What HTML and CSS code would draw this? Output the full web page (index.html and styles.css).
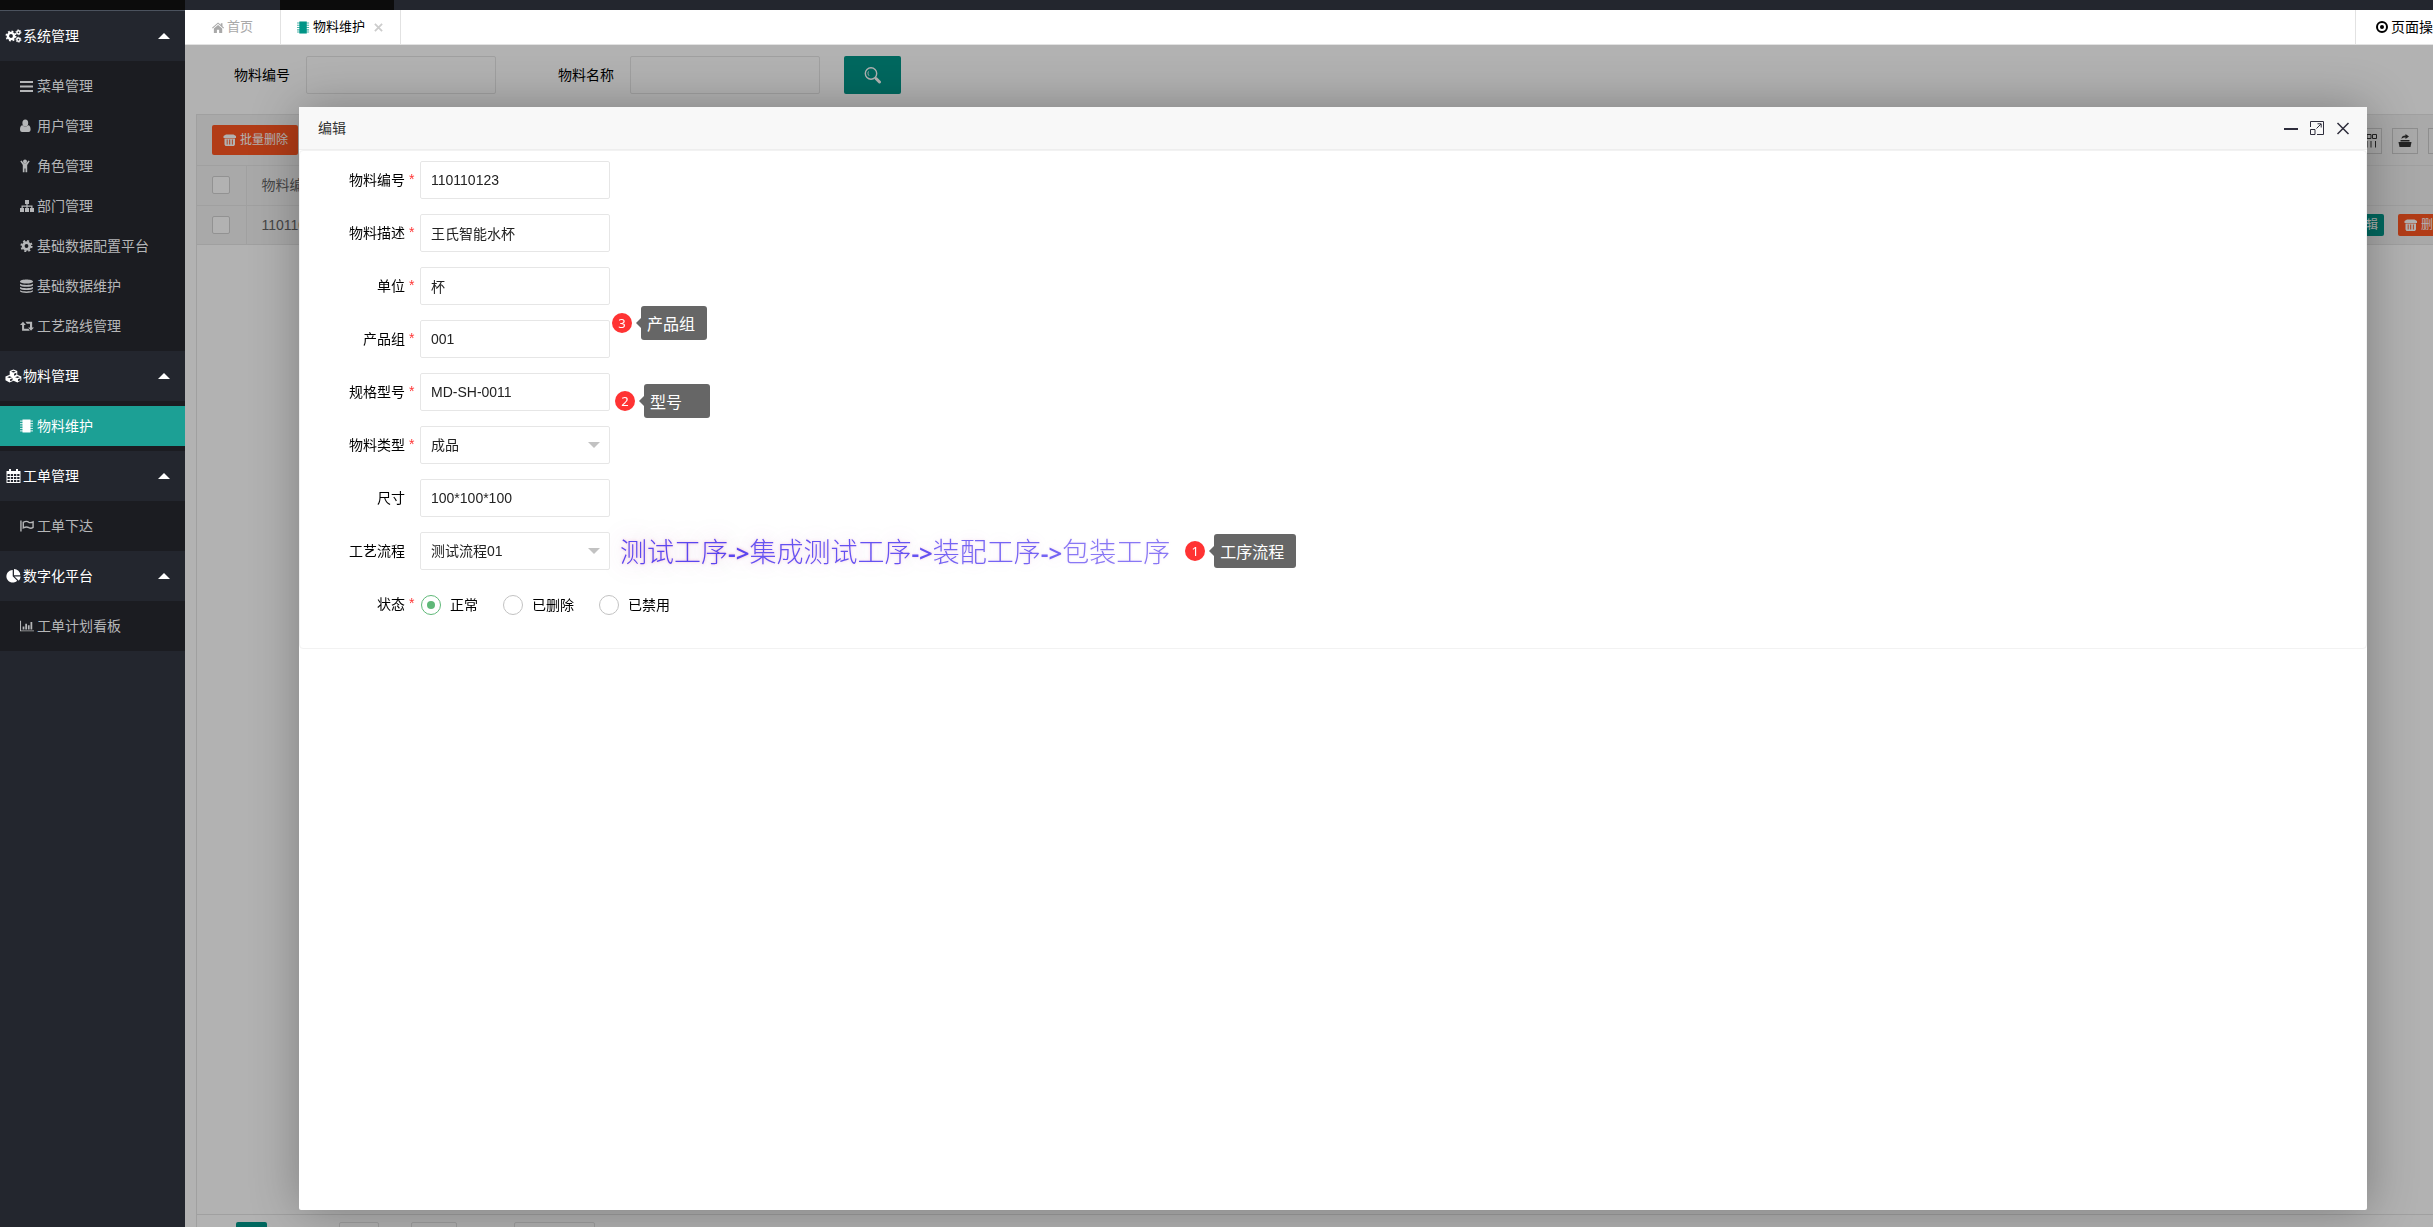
FILE: index.html
```html
<!DOCTYPE html>
<html lang="zh-CN">
<head>
<meta charset="utf-8">
<title>物料维护</title>
<link rel="stylesheet" href="styles.css">
</head>
<body>
<svg class="defs" aria-hidden="true">
  <symbol id="i-gears" viewBox="0 0 16 14"><circle cx="5.500" cy="7" r="3.100" fill="none" stroke="currentColor" stroke-width="2.400"/><circle cx="5.500" cy="7" r="4.700" fill="none" stroke="currentColor" stroke-width="1.600" stroke-dasharray="1.850 1.840"/><circle cx="13" cy="3.300" r="1.600" fill="none" stroke="currentColor" stroke-width="1.500"/><circle cx="13" cy="3.300" r="2.500" fill="none" stroke="currentColor" stroke-width="1" stroke-dasharray="1.200 1.400"/><circle cx="13" cy="10.700" r="1.600" fill="none" stroke="currentColor" stroke-width="1.500"/><circle cx="13" cy="10.700" r="2.500" fill="none" stroke="currentColor" stroke-width="1" stroke-dasharray="1.200 1.400"/></symbol>
  <symbol id="i-bars" viewBox="0 0 14 14"><path d="M0 2h13v2H0zM0 6.500h13v2H0zM0 11h13v2H0z"/></symbol>
  <symbol id="i-user" viewBox="0 0 14 14"><ellipse cx="5.300" cy="4" rx="2.900" ry="3.500"/><path d="M0 10.500C0 8 .8 6.200 2.500 6.200c1.500 1.600 4.100 1.600 5.600 0 1.700 0 2.500 1.800 2.500 4.300 0 1.700-1 2.500-2 2.500H2c-1 0-2-.8-2-2.500z"/></symbol>
  <symbol id="i-child" viewBox="0 0 14 14"><circle cx="5" cy="2.500" r="2"/><path d="M.3 2.200 1.500 1.500 3.800 4.300h2.400L8.500 1.500l1.200.7L7.200 6v7.200H5.500V9.500h-1v3.700H2.800V6z"/></symbol>
  <symbol id="i-sitemap" viewBox="0 0 14 14"><path d="M5 1h4v4H7.600v1.500H12.500V9H14v4h-4V9h1.200V7.700H7.600V9H9v4H5V9h1.400V7.700H2.800V9H4v4H0V9h1.500V6.500h4.900V5H5z"/></symbol>
  <symbol id="i-cog" viewBox="0 0 14 14"><circle cx="6.500" cy="7" r="3.300" fill="none" stroke="currentColor" stroke-width="2.800"/><circle cx="6.500" cy="7" r="5.200" fill="none" stroke="currentColor" stroke-width="1.800" stroke-dasharray="2.050 2.034"/></symbol>
  <symbol id="i-db" viewBox="0 0 14 14"><path d="M0 2.500C0-.3 13-.3 13 2.500S0 5.300 0 2.500zM0 4.700c2 1.600 11 1.600 13 0v1.500c-1 2-12 2-13 0zM0 8c2 1.600 11 1.600 13 0v1.500c-1 2-12 2-13 0zM0 11.200c2 1.600 11 1.600 13 0v1c-1 2.300-12 2.300-13 0z"/></symbol>
  <symbol id="i-retweet" viewBox="0 0 15 14"><path d="M3.200 2.500 6.300 6H4.400v4h4.600l1.500 2H2.200V6H0zM5.800 2.500h7.200V8.500h2L11.800 12 8.700 8.500h2v-4H7.400z"/></symbol>
  <symbol id="i-cubes" viewBox="0 0 18 14"><path fill-rule="evenodd" d="M9 0l4 1.600v4.200l4.300 1.800v4L13.200 14 9 12 4.800 14 .5 11.600v-4L5 5.800V1.600zM9 1.400 6.500 2.400 9 3.400l2.500-1zM9.600 4.600v2.200L12 5.700V3.600zM4.800 7.200 2.300 8.200l2.500 1 2.500-1zM5.400 10.400v2.200L8 11.400V9.300zM13.200 7.200l-2.500 1 2.500 1 2.500-1zM13.800 10.400v2.200l2.500-1.200V9.300z"/></symbol>
  <symbol id="i-chip" viewBox="0 0 14 14"><path d="M2.500.5h8v13h-8z"/><path d="M0 1.500h13v1.200H0zM0 4h13v1.200H0zM0 6.400h13v1.200H0zM0 8.900h13v1.200H0zM0 11.300h13v1.200H0z" opacity=".7"/></symbol>
  <symbol id="i-cal" viewBox="0 0 14 14"><path fill-rule="evenodd" d="M0 2h2.500V0h2v2h5V0h2v2H14v12H0zM1 5v2h2.300V5zM4.300 5v2h2.300V5zM7.500 5v2h2.300V5zM10.700 5v2H13V5zM1 8v2h2.300V8zM4.300 8v2h2.300V8zM7.500 8v2h2.300V8zM10.700 8v2H13V8zM1 11v2h2.300v-2zM4.300 11v2h2.300v-2zM7.500 11v2h2.300v-2zM10.700 11v2H13v-2z"/></symbol>
  <symbol id="i-flag" viewBox="0 0 15 14"><path d="M1 1v12M3.500 3c3-1.600 4.500-1.200 6 0 1.500.8 3 .3 4.500-.5v6c-1.500 1-3 1.200-4.500.3-1.500-1-3-1.200-6 .2z" fill="none" stroke="currentColor" stroke-width="1.500"/></symbol>
  <symbol id="i-pie" viewBox="0 0 14 14"><path d="M6.200 1v6.300l4.500 4.400A6.300 6.300 0 1 1 6.200 1zM7.500 0A6.400 6.400 0 0 1 13.800 6.300H7.500zM8 7.500h6c0 1.500-.6 3.100-1.700 4.200z"/></symbol>
  <symbol id="i-chart" viewBox="0 0 16 14"><path d="M0 1h1.200v11H16v1H0zM3 7.500h2V11H3zM6 4.500h2V11H6zM9 6h2v5H9zM12 2.500h2V11h-2z"/></symbol>
  <symbol id="i-home" viewBox="0 0 14 14"><path d="M6.500 1.500 9.500 4V2.300h1.800v3.300L13 7.200l-.8.8-5.700-5L.8 8 0 7.200zM6.500 4.200 11 8v5H7.700V9.300H5.300V13H2V8z"/></symbol>
  <symbol id="i-trash" viewBox="0 0 14 14"><path fill-rule="evenodd" d="M3 1.500h7.500L13 3v2H.5V3zM1.500 5.500H12V11.500l-1 1.500H2.500l-1-1.500zM3.700 6.500v5h.9v-5zM6.200 6.500v5h1v-5zM8.900 6.500v5h.9v-5z"/></symbol>
  <symbol id="i-search" viewBox="0 0 18 18"><circle cx="7" cy="7.500" r="5.700" fill="none" stroke="currentColor" stroke-width="1.400"/><path d="M4.500 5.500c-.8 1.300-.6 3 .5 4.200" fill="none" stroke="currentColor"/><path d="m12 12.500 3.500 3.500" stroke="currentColor" stroke-width="3" stroke-linecap="round"/></symbol>
  <symbol id="i-grid" viewBox="0 0 16 14"><path d="M.5.500h4v4h-4zM6 .5h4v4H6zM11.500.5h4v4h-4zM2 7v6.500M6 7v6.500M10 7v6.500M14.500 7v6.500" fill="none" stroke="currentColor"/></symbol>
  <symbol id="i-export" viewBox="0 0 14 14"><path d="M.5 8h13l-1 5h-11z"/><path d="M2.500 6h9v1.500h-9zM3.500 5c0-2.500 1.500-3.500 4-3.500V0l3.500 2.500L7.500 5V3.500C5.500 3.500 4.500 3.700 3.500 5z"/></symbol>
</svg>

<header class="topbar">
  <div class="topbar-logo"></div>
  <nav class="topbar-nav" aria-label="顶部导航"><span class="topbar-current"></span></nav>
</header>

<div class="shell">
  <aside class="sidebar">
    <section class="group">
      <button class="group-head" type="button"><svg class="icon"><use href="#i-gears"/></svg>系统管理</button>
      <nav class="group-body">
        <a class="item" href="#"><svg class="icon"><use href="#i-bars"/></svg>菜单管理</a>
        <a class="item" href="#"><svg class="icon"><use href="#i-user"/></svg>用户管理</a>
        <a class="item" href="#"><svg class="icon"><use href="#i-child"/></svg>角色管理</a>
        <a class="item" href="#"><svg class="icon"><use href="#i-sitemap"/></svg>部门管理</a>
        <a class="item" href="#"><svg class="icon"><use href="#i-cog"/></svg>基础数据配置平台</a>
        <a class="item" href="#"><svg class="icon"><use href="#i-db"/></svg>基础数据维护</a>
        <a class="item" href="#"><svg class="icon"><use href="#i-retweet"/></svg>工艺路线管理</a>
      </nav>
    </section>
    <section class="group">
      <button class="group-head" type="button"><svg class="icon"><use href="#i-cubes"/></svg>物料管理</button>
      <nav class="group-body">
        <a class="item item-active" href="#"><svg class="icon"><use href="#i-chip"/></svg>物料维护</a>
      </nav>
    </section>
    <section class="group">
      <button class="group-head" type="button"><svg class="icon"><use href="#i-cal"/></svg>工单管理</button>
      <nav class="group-body">
        <a class="item" href="#"><svg class="icon"><use href="#i-flag"/></svg>工单下达</a>
      </nav>
    </section>
    <section class="group">
      <button class="group-head" type="button"><svg class="icon"><use href="#i-pie"/></svg>数字化平台</button>
      <nav class="group-body">
        <a class="item" href="#"><svg class="icon"><use href="#i-chart"/></svg>工单计划看板</a>
      </nav>
    </section>
  </aside>

  <div class="main">
    <div class="tabs">
      <a class="tab tab-home" href="#"><svg class="icon"><use href="#i-home"/></svg>首页</a>
      <a class="tab tab-active" href="#"><svg class="icon"><use href="#i-chip"/></svg>物料维护
        <svg class="tab-close" viewBox="0 0 10 10"><path d="m1 1 8 8M9 1 1 9"/></svg></a>
      <button class="tab-ops" type="button"><svg class="ops-icon" viewBox="0 0 12 12"><circle cx="6" cy="6" r="5"/><circle class="ops-dot" cx="6" cy="6" r="2"/></svg>页面操作</button>
    </div>

    <main class="content">
      <form class="search">
        <label class="search-label" for="s-code">物料编号</label>
        <input class="text-input" id="s-code" type="text">
        <label class="search-label search-label-next" for="s-name">物料名称</label>
        <input class="text-input" id="s-name" type="text">
        <button class="search-btn" type="button" aria-label="搜索"><svg><use href="#i-search"/></svg></button>
      </form>

      <div class="panel">
        <div class="toolbar">
          <button class="btn btn-danger" type="button"><svg class="icon"><use href="#i-trash"/></svg>批量删除</button>
          <div class="tools">
            <button class="tool" type="button" aria-label="筛选列"><svg><use href="#i-grid"/></svg></button>
            <button class="tool" type="button" aria-label="导出"><svg><use href="#i-export"/></svg></button>
            <button class="tool" type="button" aria-label="打印"></button>
          </div>
        </div>
        <table class="grid">
          <thead>
            <tr><th class="col-check"><input class="check" type="checkbox" aria-label="全选"></th><th>物料编号</th><th class="col-ops"></th></tr>
          </thead>
          <tbody>
            <tr><td class="col-check"><input class="check" type="checkbox" aria-label="选择"></td><td>110110123</td>
              <td class="col-ops"><div class="row-ops"><button class="btn btn-small btn-primary" type="button">编辑</button><button class="btn btn-small btn-danger" type="button"><svg class="icon"><use href="#i-trash"/></svg>删除</button></div></td></tr>
          </tbody>
        </table>
        <div class="pager">
          <button class="page-current" type="button" aria-label="当前页"></button>
          <input class="page-box page-jump" type="text" aria-label="页码">
          <button class="page-box page-go" type="button" aria-label="跳转"></button>
          <select class="page-box page-size" aria-label="每页条数"></select>
        </div>
      </div>

      <div class="shade"></div>
    </main>
  </div>
</div>

<div class="dialog" role="dialog" aria-labelledby="dlg-title">
  <div class="dialog-head">
    <h2 class="dialog-title" id="dlg-title">编辑</h2>
    <button class="dialog-btn" type="button" aria-label="最小化"><svg viewBox="0 0 14 14"><path class="bold" d="M0 8h14"/></svg></button>
    <button class="dialog-btn" type="button" aria-label="最大化"><svg viewBox="0 0 14 14"><path d="M.5 6V.5h13v13H7M.5 8.500H5v5H.5zM6.500 7.500 11 3M7.500 2.800h3.700v3.700"/></svg></button>
    <button class="dialog-btn" type="button" aria-label="关闭"><svg viewBox="0 0 14 14"><path class="mid" d="m1.500 2 11 11M12.500 2l-11 11"/></svg></button>
  </div>
  <form class="form">
    <div class="row"><label class="label required" for="f1">物料编号</label><input class="text-input" id="f1" type="text" value="110110123"></div>
    <div class="row"><label class="label required" for="f2">物料描述</label><input class="text-input" id="f2" type="text" value="王氏智能水杯"></div>
    <div class="row"><label class="label required" for="f3">单位</label><input class="text-input" id="f3" type="text" value="杯"></div>
    <div class="row"><label class="label required" for="f4">产品组</label><input class="text-input" id="f4" type="text" value="001">
      <div class="note note-group"><span class="note-num">3</span><span class="note-text">产品组</span></div></div>
    <div class="row"><label class="label required" for="f5">规格型号</label><input class="text-input" id="f5" type="text" value="MD-SH-0011">
      <div class="note note-model"><span class="note-num">2</span><span class="note-text">型号</span></div></div>
    <div class="row"><label class="label required" for="f6">物料类型</label><span class="select-wrap"><select class="text-input" id="f6"><option>成品</option></select></span></div>
    <div class="row"><label class="label" for="f7">尺寸</label><input class="text-input" id="f7" type="text" value="100*100*100"></div>
    <div class="row"><label class="label" for="f8">工艺流程</label><span class="select-wrap"><select class="text-input" id="f8"><option>测试流程01</option></select></span>
      <p class="flow"><span class="step step-1">测试工序<b>-&gt;</b></span><span class="step step-2">集成测试工序<b>-&gt;</b></span><span class="step step-3">装配工序<b>-&gt;</b></span><span class="step step-4">包装工序</span></p>
      <div class="note"><span class="note-num">1</span><span class="note-text">工序流程</span></div></div>
    <div class="row" role="radiogroup" aria-labelledby="f9"><span class="label required" id="f9">状态</span>
      <div class="radios">
        <label class="radio"><input type="radio" name="status" checked>正常</label>
        <label class="radio"><input type="radio" name="status">已删除</label>
        <label class="radio"><input type="radio" name="status">已禁用</label>
      </div></div>
  </form>
</div>
</body>
</html>
```
FILE: styles.css
```css
* { box-sizing: border-box; }

html, body { height: 100%; margin: 0; overflow: hidden; }

body {
  display: flex;
  flex-direction: column;
  font: 14px/20px "Liberation Sans", "Noto Sans CJK SC", sans-serif;
  color: #000;
  background: #fff;
}

button, input, select { font: inherit; color: inherit; margin: 0; }
button { border: 0; padding: 0; background: none; cursor: pointer; }
a { color: inherit; text-decoration: none; }
svg { display: block; fill: currentColor; }
.defs { position: absolute; width: 0; height: 0; }
.icon { flex: none; width: 14px; height: 14px; }

/* Top bar */
.topbar { display: flex; flex: none; height: 10px; background: #23262e; }
.topbar-logo { width: 185px; background: #0c0c0c; }
.topbar-nav { display: flex; flex: 1; padding-left: 95px; }
.topbar-current { width: 114px; background: #0c0c0c; }

.shell { display: flex; flex: 1; min-height: 0; }

/* Sidebar */
.sidebar { flex: none; width: 185px; background: #23262e; border-top: 1px solid #4b525e; }
.group-head {
  display: flex;
  align-items: center;
  gap: 1px;
  width: 100%;
  height: 50px;
  padding: 0 15px 0 5px;
  color: #fff;
}
.group-head .icon { width: 17px; }
.group-head::after {
  content: "";
  margin-left: auto;
  border: 6px solid transparent;
  border-top: 0;
  border-bottom-color: #fff;
}
.group-body { padding: 5px 0; background: #1b1c21; }
.item { display: flex; align-items: center; gap: 3px; height: 40px; padding-left: 20px; color: #b5b6b8; }
.item-active { background: #1ca095; color: #fff; }

/* Tabs */
.main { display: flex; flex-direction: column; flex: 1; min-width: 0; margin-right: -40px; }
.tabs {
  display: flex;
  flex: none;
  height: 35px;
  background: #fff;
  border-bottom: 1px solid #e2e2e2;
  font-size: 13px;
}
.tab { display: flex; align-items: center; gap: 2px; border-right: 1px solid #e2e2e2; }
.tab .icon { width: 13px; height: 13px; }
.tab-home { width: 96px; padding-left: 27px; color: #a9a9a9; }
.tab-active { width: 120px; padding-left: 16px; gap: 3px; }
.tab-active .icon { color: #009688; }
.tab-close { width: 9px; height: 9px; margin-left: 6px; fill: none; stroke: #ccc; stroke-width: 2; }
.tab-ops {
  display: flex;
  align-items: center;
  gap: 3px;
  width: 118px;
  margin-left: auto;
  padding-left: 20px;
  border-left: 1px solid #e2e2e2;
  font-size: 14px;
}
.ops-icon { width: 12px; height: 12px; fill: none; stroke: #000; stroke-width: 2; }
.ops-dot { fill: #000; stroke: none; }

/* Page content */
.content { position: relative; display: flex; flex-direction: column; flex: 1; min-height: 0; padding: 11px 11px 0; }
.shade { position: absolute; inset: 0; background: rgba(0, 0, 0, .3); }

.text-input {
  width: 190px;
  height: 38px;
  padding: 0 10px;
  border: 1px solid #e6e6e6;
  border-radius: 2px;
  background: #fff;
  color: #222;
  appearance: none;
}

.search { display: flex; align-items: center; flex: none; height: 38px; padding-left: 38px; }
.search-label { width: 72px; }
.search-label-next { margin-left: 62px; }
.search-btn { display: grid; place-items: center; width: 57px; height: 38px; margin-left: 24px; border-radius: 2px; background: #009688; color: #fff; }
.search-btn svg { width: 18px; height: 18px; }

.panel { display: flex; flex-direction: column; flex: 1; min-height: 0; margin-top: 20px; border: 1px solid #e6e6e6; border-bottom: 0; }
.toolbar { display: flex; align-items: center; flex: none; height: 51px; padding: 0 7px 0 15px; background: #f2f2f2; border-bottom: 1px solid #e6e6e6; }
.tools { display: flex; gap: 10px; margin-left: auto; }
.tool { display: grid; place-items: center; width: 26px; height: 26px; margin-top: 2px; border: 1px solid #ccc; color: #333; }
.tool svg { width: 16px; height: 14px; }

.btn { display: flex; align-items: center; gap: 3px; height: 30px; padding: 0 10px 0 11px; border-radius: 2px; color: #fff; font-size: 12px; }
.btn-danger { background: #ff5722; }
.btn-primary { background: #009688; }
.btn-small { height: 22px; padding: 0 6px; }

.grid { width: 100%; border-collapse: collapse; background: #f2f2f2; color: #666; }
.grid th, .grid td { height: 39px; padding: 0 15px; border-bottom: 1px solid #e6e6e6; text-align: left; font-weight: inherit; }
.grid .col-check { width: 49px; border-right: 1px solid #e6e6e6; }
.check { display: block; width: 18px; height: 18px; margin: 0; border: 1px solid #d2d2d2; border-radius: 2px; background: #fff; appearance: none; }
.grid .col-ops { padding-right: 0; }
.row-ops { display: flex; justify-content: flex-end; gap: 14px; padding-right: 10px; }

.pager { display: flex; align-items: flex-start; height: 13px; margin-top: auto; padding: 7px 0 0 39px; border-top: 1px solid #e6e6e6; overflow: hidden; }
.page-current { width: 31px; height: 26px; border-radius: 2px; background: #009688; }
.page-box { height: 26px; padding: 0; border: 1px solid #e2e2e2; border-radius: 2px; background: #fff; appearance: none; }
.page-jump { width: 40px; margin-left: 72px; }
.page-go { width: 46px; margin-left: 32px; }
.page-size { width: 81px; margin-left: 57px; }

/* Edit dialog */
.dialog {
  position: fixed;
  inset: 107px 66px 17px 299px;
  border-radius: 2px;
  background: #fff;
  box-shadow: 1px 1px 50px rgba(0, 0, 0, .3);
}
.dialog-head { display: flex; align-items: center; gap: 12px; height: 43px; padding: 0 17px 0 19px; background: #f8f8f8; border-bottom: 1px solid #eee; }
.dialog-title { flex: 1; margin: 0; font-size: 14px; font-weight: 400; color: #333; }
.dialog-btn svg { width: 14px; height: 14px; fill: none; stroke: #2e2d3c; }
.dialog-btn .bold { stroke-width: 2; }
.dialog-btn .mid { stroke-width: 1.5; }

.form { display: flex; flex-direction: column; gap: 15px; padding: 10px 10px 25px; border: 1px solid #f2f2f2; border-radius: 4px; }
.row { position: relative; display: flex; align-items: center; height: 38px; }
.label { display: flex; justify-content: flex-end; flex: none; width: 110px; }
.label::after { content: ""; width: 11px; margin-left: 4px; color: #f33; line-height: 18px; }
.required::after { content: "*"; }

.select-wrap { position: relative; }
.select-wrap .text-input { display: block; }
.select-wrap::after {
  content: "";
  position: absolute;
  top: 16px;
  right: 10px;
  border: 6px solid transparent;
  border-bottom: 0;
  border-top-color: #c2c2c2;
  pointer-events: none;
}

/* Process route */
.flow { display: flex; margin: 0 15px 0 10px; padding-top: 4px; font-size: 27px; font-weight: 300; line-height: 38px; white-space: nowrap; }
.step b { font: 600 24px/38px "Noto Sans", sans-serif; }
.step-1 { color: #5a46f0; text-shadow: 0 0 3px rgba(235, 110, 170, .5), 0 0 24px rgba(170, 70, 160, .35); }
.step-2 { color: #6452f2; text-shadow: 0 0 3px rgba(235, 110, 180, .35), 0 0 20px rgba(170, 70, 180, .22); }
.step-3 { color: #7464f4; text-shadow: 0 0 3px rgba(220, 110, 200, .25), 0 0 16px rgba(170, 70, 190, .14); }
.step-4 { color: #8878f5; text-shadow: 0 0 3px rgba(210, 110, 210, .2); }

/* Numbered callouts */
.note { display: flex; align-items: center; gap: 9px; }
.note-num { display: grid; place-items: center; width: 20px; height: 20px; border-radius: 50%; background: #f33; color: #fff; font: 13px/20px "Noto Sans", sans-serif; }
.note-text { position: relative; min-width: 66px; height: 34px; padding: 0 12px 0 6px; border-radius: 3px; background: #666; color: #fff; font: 16px/34px "Noto Sans CJK SC", sans-serif; }
.note-text::before { content: ""; position: absolute; top: 12px; left: -5px; border: 5px solid transparent; border-left: 0; border-right-color: #666; }
.note-group, .note-model { position: absolute; }
.note-group { left: 302px; top: -14px; }
.note-model { left: 305px; top: 11px; }

/* Status */
.radios { display: flex; align-items: center; gap: 25px; padding: 2px 0 0 1px; }
.radio { display: flex; align-items: center; gap: 9px; }
.radio input { display: grid; place-items: center; width: 20px; height: 20px; border: 1px solid #c2c2c2; border-radius: 50%; background: #fff; appearance: none; }
.radio input:checked { border-color: #5fb878; }
.radio input:checked::before { content: ""; width: 8px; height: 8px; border-radius: 50%; background: #5fb878; }
```
